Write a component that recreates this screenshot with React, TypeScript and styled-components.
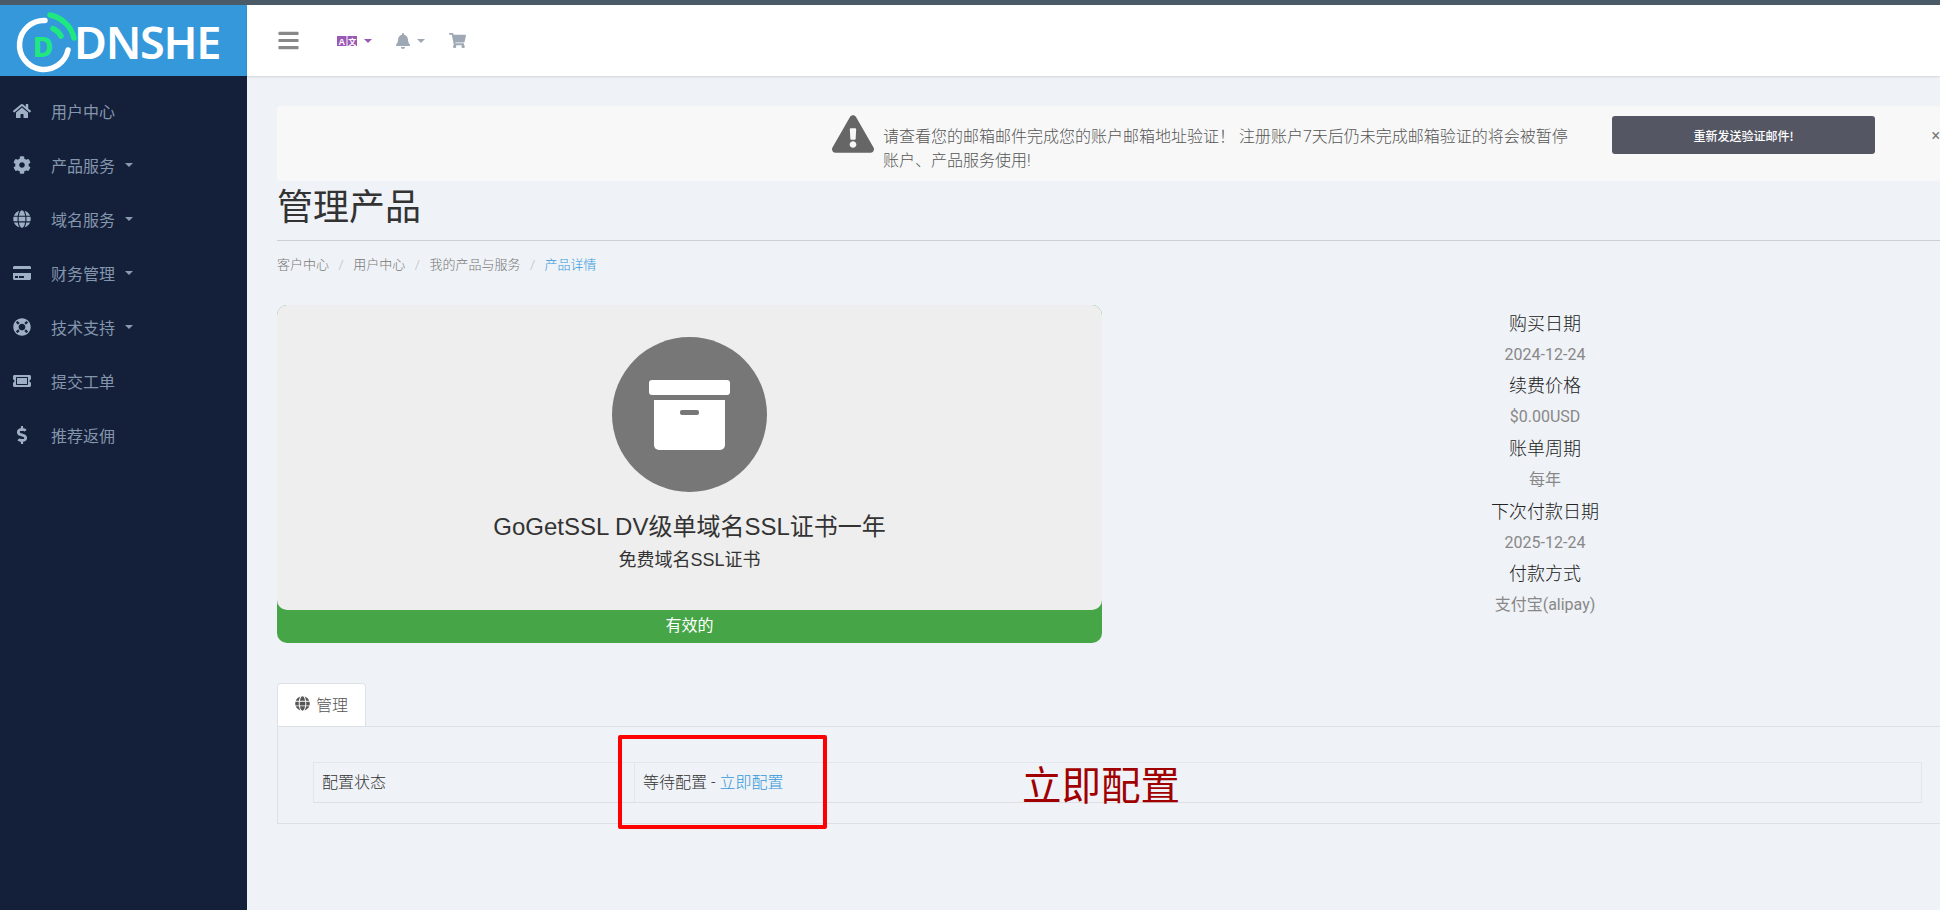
import styled, { createGlobalStyle } from 'styled-components';
import {
  FaBars,
  FaBell,
  FaCog,
  FaCreditCard,
  FaDollarSign,
  FaExclamationTriangle,
  FaGlobe,
  FaHome,
  FaLifeRing,
  FaShoppingCart,
  FaTicketAlt,
} from 'react-icons/fa';

const cjk = '"Noto Sans CJK SC", sans-serif';

const Global = createGlobalStyle`
  html, body { margin: 0; padding: 0; }
  body {
    font-family: Roboto, ${cjk};
    font-size: 16px;
    color: #333;
    background: #eff2f6;
  }
`;

const Page = styled.div`
  width: 1940px;
  height: 910px;
  overflow: hidden;
  display: flex;
  flex-direction: column;
`;

const TopStrip = styled.div`
  height: 5px;
  flex: none;
  background: #4a5a66;
`;

const Body = styled.div`
  flex: 1;
  display: flex;
  min-height: 0;
`;

const Sidebar = styled.aside`
  width: 247px;
  flex: none;
  background: #141f3a;
`;

const Logo = styled.div`
  height: 71px;
  background: #3498db;
  display: flex;
  align-items: center;
`;

const LogoText = styled.span`
  font-family: "Noto Sans", sans-serif;
  font-size: 45px;
  font-weight: 600;
  line-height: 1;
  color: #fff;
  margin: 2px 0 0 -3px;
  letter-spacing: -1.3px;
`;

const Menu = styled.nav`
  display: flex;
  flex-direction: column;
  padding-top: 8px;
`;

const MenuItem = styled.a`
  height: 54px;
  display: flex;
  align-items: center;
  color: #8496ab;
  font-size: 16px;
  font-weight: 400;
  svg { color: #9fb0c4; }
`;

const MenuIcon = styled.span`
  width: 51px;
  flex: none;
  display: flex;
  justify-content: center;
  padding-right: 7px;
  box-sizing: border-box;
  font-size: 18px;
`;

const Caret = styled.i<{ $color?: string; $gap?: number }>`
  display: inline-block;
  margin-left: ${({ $gap }) => $gap ?? 10}px;
  border-top: 4px solid ${({ $color }) => $color || '#8a9bb0'};
  border-left: 4px solid transparent;
  border-right: 4px solid transparent;
`;

const Main = styled.div`
  flex: 1;
  min-width: 0;
  display: flex;
  flex-direction: column;
`;

const Header = styled.header`
  height: 71px;
  flex: none;
  background: #fff;
  box-shadow: 0 1px 2px rgba(0, 0, 0, 0.12);
  display: flex;
  align-items: center;
  padding-left: 30px;
`;

const MenuButton = styled.span`
  display: flex;
  color: #888;
  font-size: 23px;
  margin-right: 37px;
`;

const HeaderIcon = styled.span<{ $color: string; $gap: number }>`
  display: flex;
  align-items: center;
  color: ${({ $color }) => $color};
  margin-right: ${({ $gap }) => $gap}px;
`;

const Content = styled.main`
  padding: 30px 0 0 30px;
`;

const Alert = styled.div`
  height: 75px;
  background: #f8f8f8;
  border-radius: 3px;
  display: flex;
  align-items: flex-start;
  padding-left: 555px;
  position: relative;
`;

const AlertIcon = styled.span`
  display: flex;
  color: #666;
  font-size: 42px;
  margin: 7px 9px 0 0;
`;

const AlertText = styled.p`
  width: 700px;
  margin: 19px 0 0;
  font-size: 16px;
  line-height: 24px;
  font-weight: 300;
  color: #555;
`;

const ResendButton = styled.button`
  width: 263px;
  height: 38px;
  margin: 10px 0 0 29px;
  border: 0;
  border-radius: 3px;
  background: #555663;
  color: #fff;
  font-family: ${cjk};
  font-size: 12px;
  font-weight: 500;
`;

const Close = styled.span`
  position: absolute;
  right: 0;
  top: 20px;
  font-size: 16px;
  color: #777;
`;

const Title = styled.h1`
  margin: 0;
  height: 59px;
  border-bottom: 1px solid #ccd0d6;
  font-size: 36px;
  font-weight: 400;
  line-height: 54px;
  color: #333;
`;

const Breadcrumb = styled.ol`
  list-style: none;
  display: flex;
  margin: 0;
  padding: 15px 0 0;
  height: 49px;
  font-size: 13px;
  font-weight: 300;
  line-height: 18px;
  color: #777;
`;

const Crumb = styled.li<{ $active?: boolean }>`
  color: ${({ $active }) => ($active ? '#3498db' : '#777')};
  &:not(:last-child)::after {
    content: '/';
    color: #bbb;
    margin: 0 9.5px;
  }
`;

const Overview = styled.section`
  display: flex;
  height: 338px;
`;

const ProductCard = styled.div`
  width: 825px;
  flex: none;
  border-radius: 10px;
  overflow: hidden;
  background: #46a546;
  display: flex;
  flex-direction: column;
`;

const ProductBody = styled.div`
  flex: 1;
  display: flex;
  flex-direction: column;
  align-items: center;
  padding-top: 32px;
  background: #eee;
  border-radius: 0 0 10px 10px;
`;

const ProductCircle = styled.div`
  width: 155px;
  height: 155px;
  border-radius: 50%;
  background: #777;
  display: flex;
  align-items: center;
  justify-content: center;
`;

const ProductName = styled.div`
  margin-top: 18px;
  font-family: "Liberation Sans", ${cjk};
  font-size: 24px;
  line-height: 34px;
  font-weight: 400;
  color: #333;
`;

const ProductGroup = styled.div`
  margin-top: 2px;
  font-family: "Liberation Sans", ${cjk};
  font-size: 18px;
  line-height: 28px;
  font-weight: 400;
  color: #333;
`;

const Status = styled.div`
  height: 33px;
  flex: none;
  color: #fff;
  font-size: 16px;
  line-height: 32px;
  text-align: center;
`;

const Info = styled.dl`
  flex: 1;
  margin: 2.5px 0 0 48px;
  text-align: center;
`;

const InfoLabel = styled.dt`
  font-size: 18px;
  line-height: 31px;
  font-weight: 300;
  color: #222;
`;

const InfoValue = styled.dd`
  margin: 0;
  font-size: 16px;
  line-height: 31.7px;
  font-weight: 400;
  color: #888;
`;

const Tabs = styled.div`
  margin-top: 40px;
  display: flex;
`;

const Tab = styled.div`
  width: 89px;
  height: 44px;
  margin-bottom: -1px;
  padding-bottom: 4px;
  box-sizing: border-box;
  border: 1px solid #dde1e6;
  border-bottom: 0;
  border-radius: 4px 4px 0 0;
  background: #fff;
  display: flex;
  align-items: center;
  justify-content: center;
  gap: 6px;
  font-size: 16px;
  font-weight: 300;
  color: #555;
  position: relative;
  svg { color: #555; font-size: 15px; }
`;

const Panel = styled.section`
  height: 98px;
  box-sizing: border-box;
  border: 1px solid #dde1e6;
  border-right: 0;
  padding: 35px 18px 0 35px;
  position: relative;
`;

const ConfigRow = styled.div`
  height: 41px;
  display: flex;
  box-sizing: border-box;
  border: 1px solid #e3e6ea;
  border-bottom-color: #dde1e6;
  font-size: 16px;
  font-weight: 300;
  color: #333;
`;

const ConfigCell = styled.div<{ $first?: boolean }>`
  box-sizing: border-box;
  padding-left: 8px;
  line-height: 39px;
  ${({ $first }) => ($first ? 'width: 321px; border-right: 1px solid #e3e6ea;' : 'flex: 1;')}
  a { color: #3498db; }
`;

const RedBox = styled.div`
  position: absolute;
  left: 340px;
  top: 8px;
  width: 209px;
  height: 94px;
  box-sizing: border-box;
  border: 4px solid #f00;
  border-radius: 2px;
`;

const RedNote = styled.div`
  position: absolute;
  left: 744px;
  top: 32px;
  font-size: 39.5px;
  line-height: 56px;
  color: #a00000;
`;

const menu = [
  { icon: <FaHome />, label: '用户中心' },
  { icon: <FaCog />, label: '产品服务', caret: true },
  { icon: <FaGlobe />, label: '域名服务', caret: true },
  { icon: <FaCreditCard />, label: '财务管理', caret: true },
  { icon: <FaLifeRing />, label: '技术支持', caret: true },
  { icon: <FaTicketAlt />, label: '提交工单' },
  { icon: <FaDollarSign />, label: '推荐返佣' },
];

const info = [
  ['购买日期', '2024-12-24'],
  ['续费价格', '$0.00USD'],
  ['账单周期', '每年'],
  ['下次付款日期', '2025-12-24'],
  ['付款方式', '支付宝(alipay)'],
];

function LogoMark() {
  return (
    <svg width="77" height="71" viewBox="0 0 77 71" style={{ flex: 'none' }}>
      <path d="M45 15.5 A24.5 24.5 0 1 0 68 45" fill="none" stroke="#fff" strokeWidth="5.5" strokeLinecap="round" />
      <path d="M50 10 A31 31 0 0 1 74 33" fill="none" stroke="#1ee87f" strokeWidth="5.5" strokeLinecap="round" />
      <path d="M53 23.5 A19 19 0 0 1 61 31" fill="none" stroke="#1ee87f" strokeWidth="5.5" strokeLinecap="round" />
      <text x="33" y="52" fontFamily="Noto Sans, sans-serif" fontSize="28" fontWeight="800" fill="#1ee87f">
        D
      </text>
    </svg>
  );
}

function LanguageIcon() {
  return (
    <svg width="20" height="10" viewBox="0 0 20 10">
      <rect width="9.5" height="10" fill="#9b59b6" />
      <rect x="10.5" width="9.5" height="10" fill="#9b59b6" />
      <text x="4.75" y="8.5" textAnchor="middle" fontFamily="Liberation Sans, sans-serif" fontSize="9" fontWeight="700" fill="#fff">
        A
      </text>
      <text x="15.25" y="8.5" textAnchor="middle" fontFamily="Noto Sans CJK SC, sans-serif" fontSize="8" fontWeight="700" fill="#fff">
        文
      </text>
    </svg>
  );
}

function BoxIcon() {
  return (
    <svg width="81" height="70" viewBox="0 0 81 70">
      <rect x="0" y="0" width="81" height="15" rx="3" fill="#fff" />
      <path d="M5 20 H76 V65 a5 5 0 0 1 -5 5 H10 a5 5 0 0 1 -5 -5 Z" fill="#fff" />
      <rect x="31" y="30" width="19" height="5" rx="2" fill="#777" />
    </svg>
  );
}

export default function App() {
  return (
    <Page>
      <Global />
      <TopStrip />
      <Body>
        <Sidebar>
          <Logo>
            <LogoMark />
            <LogoText>DNSHE</LogoText>
          </Logo>
          <Menu>
            {menu.map((m) => (
              <MenuItem key={m.label}>
                <MenuIcon>{m.icon}</MenuIcon>
                {m.label}
                {m.caret && <Caret />}
              </MenuItem>
            ))}
          </Menu>
        </Sidebar>
        <Main>
          <Header>
            <MenuButton>
              <FaBars />
            </MenuButton>
            <HeaderIcon $color="#9b59b6" $gap={23}>
              <LanguageIcon />
              <Caret $color="#9b59b6" $gap={7} />
            </HeaderIcon>
            <HeaderIcon $color="#9fa9b5" $gap={24}>
              <FaBell size={16} />
              <Caret $color="#9fa9b5" $gap={6} />
            </HeaderIcon>
            <HeaderIcon $color="#9fa9b5" $gap={0}>
              <FaShoppingCart size={17} />
            </HeaderIcon>
          </Header>
          <Content>
            <Alert>
              <AlertIcon>
                <FaExclamationTriangle />
              </AlertIcon>
              <AlertText>
                请查看您的邮箱邮件完成您的账户邮箱地址验证！ 注册账户7天后仍未完成邮箱验证的将会被暂停账户、产品服务使用!
              </AlertText>
              <ResendButton>重新发送验证邮件!</ResendButton>
              <Close>×</Close>
            </Alert>
            <Title>管理产品</Title>
            <Breadcrumb>
              <Crumb>客户中心</Crumb>
              <Crumb>用户中心</Crumb>
              <Crumb>我的产品与服务</Crumb>
              <Crumb $active>产品详情</Crumb>
            </Breadcrumb>
            <Overview>
              <ProductCard>
                <ProductBody>
                  <ProductCircle>
                    <BoxIcon />
                  </ProductCircle>
                  <ProductName>GoGetSSL DV级单域名SSL证书一年</ProductName>
                  <ProductGroup>免费域名SSL证书</ProductGroup>
                </ProductBody>
                <Status>有效的</Status>
              </ProductCard>
              <Info>
                {info.map(([label, value]) => (
                  <div key={label}>
                    <InfoLabel>{label}</InfoLabel>
                    <InfoValue>{value}</InfoValue>
                  </div>
                ))}
              </Info>
            </Overview>
            <Tabs>
              <Tab>
                <FaGlobe />
                管理
              </Tab>
            </Tabs>
            <Panel>
              <ConfigRow>
                <ConfigCell $first>配置状态</ConfigCell>
                <ConfigCell>
                  等待配置 - <a>立即配置</a>
                </ConfigCell>
              </ConfigRow>
              <RedBox />
              <RedNote>立即配置</RedNote>
            </Panel>
          </Content>
        </Main>
      </Body>
    </Page>
  );
}
